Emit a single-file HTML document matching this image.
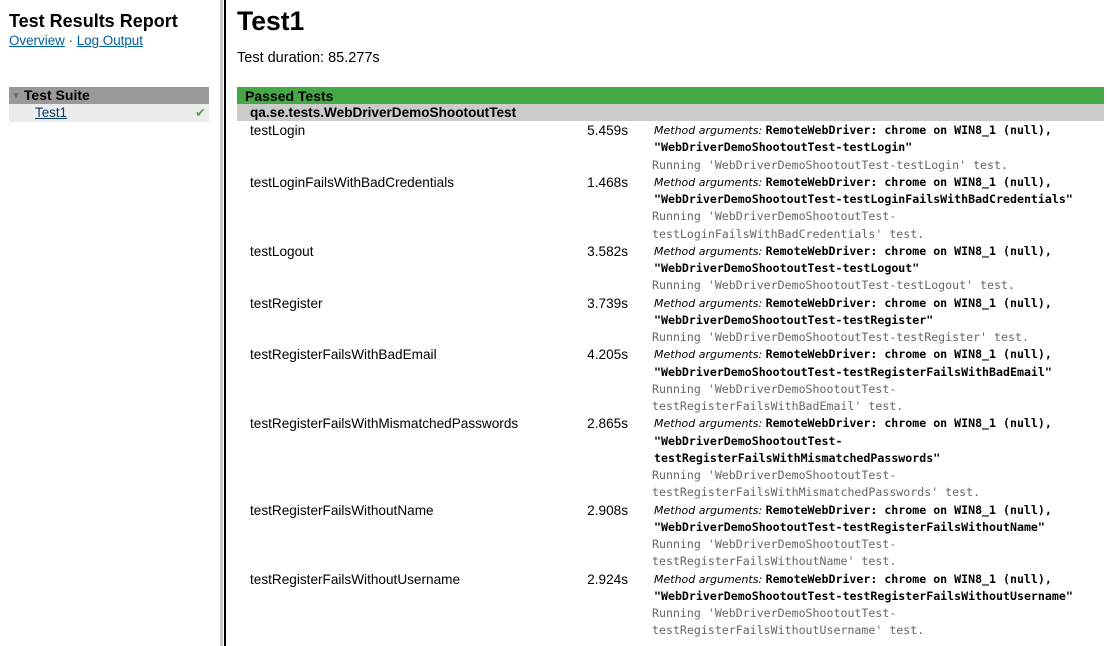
<!DOCTYPE html>
<html><head><style>
body{margin:0;width:1111px;height:646px;overflow:hidden;background:#fff;font-family:"Liberation Sans","DejaVu Sans",sans-serif;color:#000}
#side{position:absolute;left:0;top:0;width:220px;height:646px}
#bar{position:absolute;left:220px;top:0;width:3px;height:646px;background:#c8c8c8}
#bar2{position:absolute;left:224px;top:0;width:2px;height:646px;background:#000}
h1{position:absolute;left:9px;top:11px;margin:0;font-size:18px;font-weight:bold}
.links{position:absolute;left:9px;top:33px;font-size:13.4px;color:#333}
a{color:#0060a0;text-decoration:underline}
.suite{position:absolute;left:9px;top:87px;width:200px;height:17px;background:#999;font-weight:bold;font-size:14px;line-height:17px}
.suite span{color:#666;font-size:8px;margin:0 4px 0 3px;vertical-align:2px}
.t1{position:absolute;left:9px;top:104px;width:200px;height:18px;background:#ececec;font-size:13.4px;line-height:18px}
.t1 a{margin-left:26px;color:#0a3a6a}
.t1 b{position:absolute;right:3px;color:#4caa3c;font-size:13px}
#main{position:absolute;left:237px;top:0;width:867px}
h2{position:absolute;left:0;top:6px;margin:0;font-size:26.5px;font-weight:bold}
.dur{position:absolute;left:0;top:50px;font-size:14.5px}
.pass{position:absolute;left:0;top:87px;width:867px;height:17px;background:#44a844;font-weight:bold;font-size:14px;line-height:18px;padding-left:8px;box-sizing:border-box}
.cls{position:absolute;left:0;top:104px;width:867px;height:17px;background:#cbcbcb;font-weight:bold;font-size:13.6px;line-height:17px;padding-left:13px;box-sizing:border-box}
.rows{position:absolute;left:0;top:122px;width:867px}
.r{position:relative;font-size:13.6px;line-height:17.25px}
.n{position:absolute;left:13px;top:0}
.d{position:absolute;right:476px;top:0}
.a{margin-left:417px;font-family:"DejaVu Sans Mono","Liberation Mono",monospace;font-size:11.6px}
.a i{font-family:"DejaVu Sans","Liberation Sans",sans-serif;font-size:11px}
.a b{font-weight:bold}
.o{color:#666;margin-left:-2px;display:block}
</style></head><body>
<div id="side">
<h1>Test Results Report</h1>
<div class="links"><a>Overview</a> · <a>Log Output</a></div>
<div class="suite"><span>▼</span>Test Suite</div>
<div class="t1"><a>Test1</a><b>✔</b></div>
</div>
<div id="bar"></div><div id="bar2"></div>
<div id="main">
<h2>Test1</h2>
<div class="dur">Test duration: 85.277s</div>
<div class="pass">Passed Tests</div>
<div class="cls">qa.se.tests.WebDriverDemoShootoutTest</div>
<div class="rows">
<div class="r"><span class="n">testLogin</span><span class="d">5.459s</span><div class="a"><i>Method arguments: </i><b>RemoteWebDriver: chrome on WIN8_1 (null),<br>"WebDriverDemoShootoutTest-testLogin"</b><span class="o">Running 'WebDriverDemoShootoutTest-testLogin' test.</span></div></div>
<div class="r"><span class="n">testLoginFailsWithBadCredentials</span><span class="d">1.468s</span><div class="a"><i>Method arguments: </i><b>RemoteWebDriver: chrome on WIN8_1 (null),<br>"WebDriverDemoShootoutTest-testLoginFailsWithBadCredentials"</b><span class="o">Running 'WebDriverDemoShootoutTest-<br>testLoginFailsWithBadCredentials' test.</span></div></div>
<div class="r"><span class="n">testLogout</span><span class="d">3.582s</span><div class="a"><i>Method arguments: </i><b>RemoteWebDriver: chrome on WIN8_1 (null),<br>"WebDriverDemoShootoutTest-testLogout"</b><span class="o">Running 'WebDriverDemoShootoutTest-testLogout' test.</span></div></div>
<div class="r"><span class="n">testRegister</span><span class="d">3.739s</span><div class="a"><i>Method arguments: </i><b>RemoteWebDriver: chrome on WIN8_1 (null),<br>"WebDriverDemoShootoutTest-testRegister"</b><span class="o">Running 'WebDriverDemoShootoutTest-testRegister' test.</span></div></div>
<div class="r"><span class="n">testRegisterFailsWithBadEmail</span><span class="d">4.205s</span><div class="a"><i>Method arguments: </i><b>RemoteWebDriver: chrome on WIN8_1 (null),<br>"WebDriverDemoShootoutTest-testRegisterFailsWithBadEmail"</b><span class="o">Running 'WebDriverDemoShootoutTest-<br>testRegisterFailsWithBadEmail' test.</span></div></div>
<div class="r"><span class="n">testRegisterFailsWithMismatchedPasswords</span><span class="d">2.865s</span><div class="a"><i>Method arguments: </i><b>RemoteWebDriver: chrome on WIN8_1 (null),<br>"WebDriverDemoShootoutTest-<br>testRegisterFailsWithMismatchedPasswords"</b><span class="o">Running 'WebDriverDemoShootoutTest-<br>testRegisterFailsWithMismatchedPasswords' test.</span></div></div>
<div class="r"><span class="n">testRegisterFailsWithoutName</span><span class="d">2.908s</span><div class="a"><i>Method arguments: </i><b>RemoteWebDriver: chrome on WIN8_1 (null),<br>"WebDriverDemoShootoutTest-testRegisterFailsWithoutName"</b><span class="o">Running 'WebDriverDemoShootoutTest-<br>testRegisterFailsWithoutName' test.</span></div></div>
<div class="r"><span class="n">testRegisterFailsWithoutUsername</span><span class="d">2.924s</span><div class="a"><i>Method arguments: </i><b>RemoteWebDriver: chrome on WIN8_1 (null),<br>"WebDriverDemoShootoutTest-testRegisterFailsWithoutUsername"</b><span class="o">Running 'WebDriverDemoShootoutTest-<br>testRegisterFailsWithoutUsername' test.</span></div></div>
</div>
</div>
</body></html>
